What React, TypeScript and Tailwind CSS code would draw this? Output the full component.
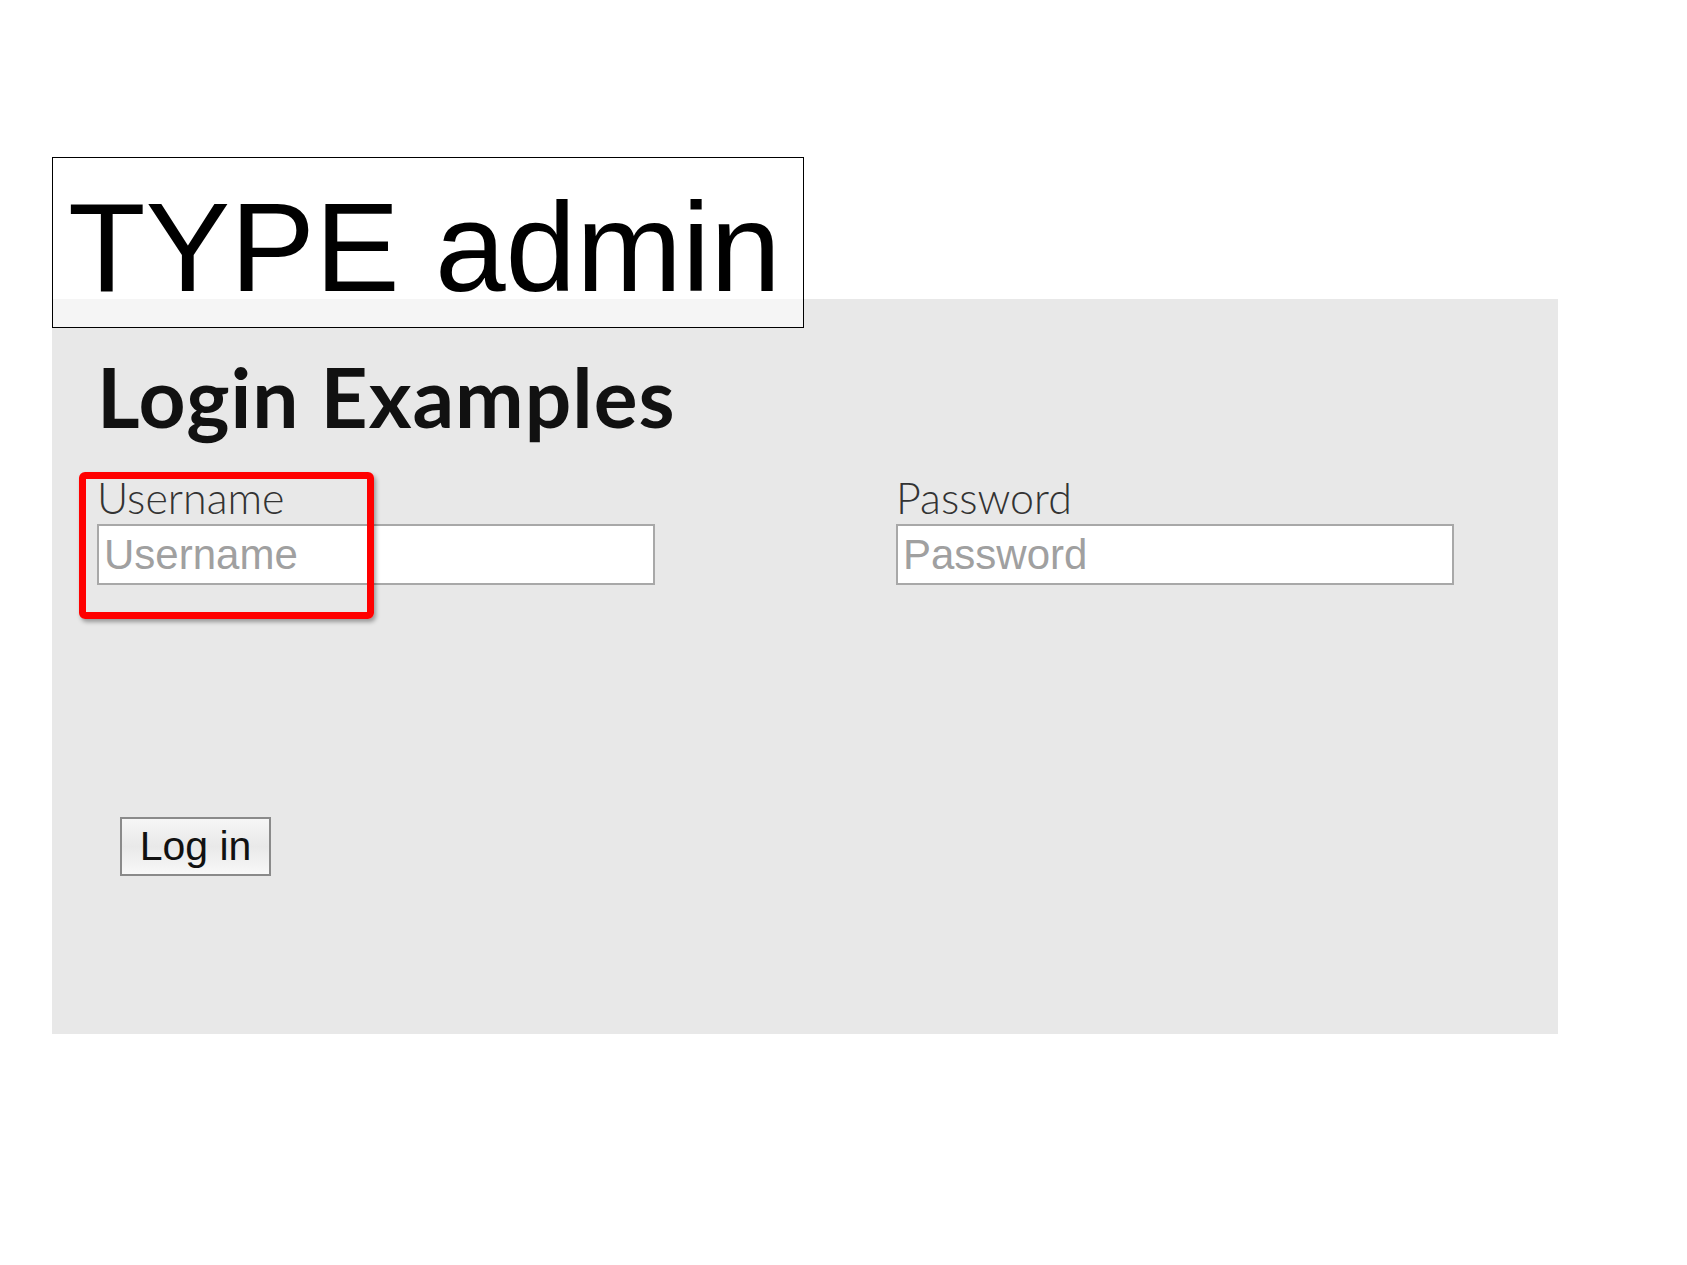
import React from "react";

export default function App() {
  return (
    <div className="relative w-[1687px] h-[1265px] bg-white overflow-hidden">
      <div className="pt-[299px] pl-[52px]">
        <div className="w-[1506px] h-[735px] bg-[#e8e8e8] pl-[45px] pt-[56px]">
          <h1
            className="text-[82px] leading-none font-bold text-[#111] tracking-[1px]"
            style={{ fontFamily: "Lato, sans-serif" }}
          >
            Login Examples
          </h1>
          <div className="flex gap-[241px] mt-[39px]">
            <div className="flex flex-col w-[558px]">
              <label
                className="text-[43px] leading-none font-light text-[#333]"
                style={{ fontFamily: "Lato, sans-serif" }}
              >
                Username
              </label>
              <input
                placeholder="Username"
                className="mt-[5px] h-[61px] w-[558px] bg-white border-2 border-[#a8a8a8] px-[5px] text-[42px] text-[#333] placeholder:text-[#a0a0a0] outline-none"
                style={{ fontFamily: "'Liberation Sans', Arial, sans-serif" }}
              />
            </div>
            <div className="flex flex-col w-[558px]">
              <label
                className="text-[43px] leading-none font-light text-[#333]"
                style={{ fontFamily: "Lato, sans-serif" }}
              >
                Password
              </label>
              <input
                type="password"
                placeholder="Password"
                className="mt-[5px] h-[61px] w-[558px] bg-white border-2 border-[#a8a8a8] px-[5px] text-[42px] text-[#333] placeholder:text-[#a0a0a0] outline-none"
                style={{ fontFamily: "'Liberation Sans', Arial, sans-serif" }}
              />
            </div>
          </div>
          <button
            className="mt-[232px] ml-[23px] w-[151px] h-[59px] border-2 border-[#8a8a8a] bg-gradient-to-b from-[#f6f6f6] via-[#e9e9e9] to-[#f8f8f8] text-[41px] leading-none text-[#111] flex items-center justify-center"
            style={{ fontFamily: "'Liberation Sans', Arial, sans-serif" }}
          >
            Log in
          </button>
        </div>
      </div>

      <div className="absolute left-[52px] top-[157px] w-[752px] h-[171px] border border-black bg-white/55">
        <div
          className="pl-[15px] pt-[26px] text-[127px] leading-none text-black"
          style={{ fontFamily: "'Liberation Sans', Arial, sans-serif" }}
        >
          TYPE admin
        </div>
      </div>

      <div className="absolute left-[79px] top-[472px] w-[295px] h-[147px] border-[7px] border-[#ff0000] rounded-[6px] shadow-[2px_3px_4px_rgba(0,0,0,0.35)]" />
    </div>
  );
}
